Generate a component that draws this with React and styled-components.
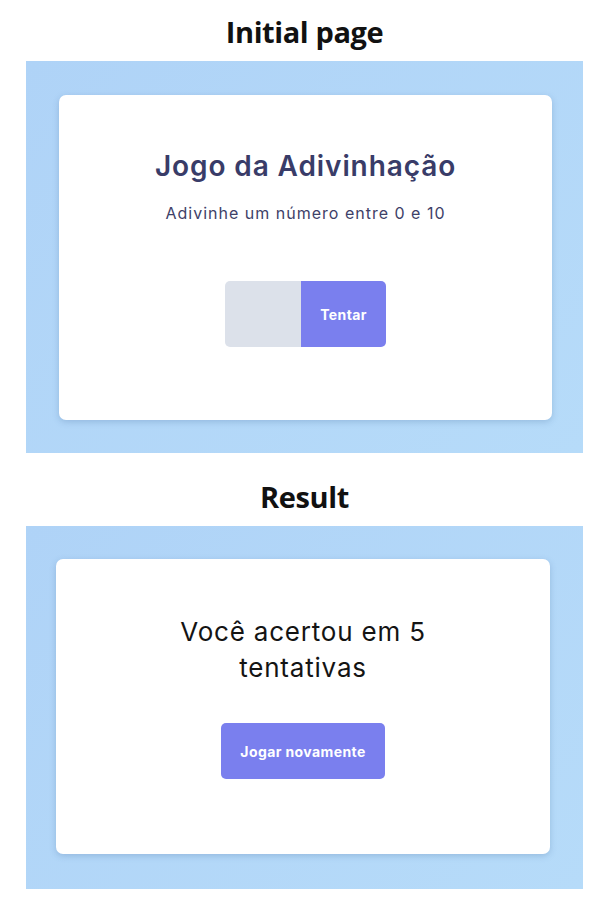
import React, { Component } from 'react';
import styled, { createGlobalStyle } from 'styled-components';

const GlobalStyle = createGlobalStyle`
  * {
    box-sizing: border-box;
  }

  body {
    margin: 0;
    background: #fff;
    font-family: 'Open Sans', 'Liberation Sans', sans-serif;
  }
`;

const Page = styled.main`
  display: flex;
  flex-direction: column;
  width: 610px;
  padding: 0 27px 12px 26px;
`;

const SectionTitle = styled.h2`
  margin: ${props => props.top}px 0 11px;
  line-height: 36px;
  text-align: center;
  font-family: 'Open Sans', 'Noto Sans', sans-serif;
  font-weight: 700;
  font-size: 29px;
  color: #111;
  letter-spacing: -0.4px;
`;

const Panel = styled.section`
  display: flex;
  height: ${props => props.height}px;
  padding: ${props => props.pad};
  background: linear-gradient(135deg, #afd3f7 0%, #b6dbf9 100%);
`;

const Card = styled.div`
  flex: 1;
  display: flex;
  flex-direction: column;
  align-items: center;
  background: #fff;
  border-radius: 7px;
  box-shadow: 0 2px 6px rgba(60, 100, 150, 0.25);
`;

const GameTitle = styled.h1`
  margin: 54px 0 0;
  font-family: 'Inter', 'Open Sans', sans-serif;
  font-weight: 600;
  font-size: 28px;
  line-height: 34px;
  letter-spacing: 0.9px;
  color: #393c68;
`;

const Subtitle = styled.p`
  margin: 19px 0 0;
  font-family: 'Inter', 'Lato', sans-serif;
  font-size: 16px;
  line-height: 22px;
  letter-spacing: 1px;
  color: #3e4168;
`;

const Form = styled.form`
  display: flex;
  margin-top: 57px;
  height: 66px;
  border-radius: 5px;
  overflow: hidden;
`;

const Input = styled.input`
  width: 76px;
  border: none;
  outline: none;
  background: #dce1ea;
  font-family: 'Inter', sans-serif;
  font-size: 18px;
  text-align: center;
  color: #333;
`;

const Button = styled.button`
  width: ${props => props.width}px;
  height: ${props => props.height}px;
  border: none;
  border-radius: ${props => (props.joined ? '0' : '5px')};
  background: #7a7fee;
  color: #fff;
  font-family: 'Inter', 'Lato', sans-serif;
  font-weight: 700;
  font-size: 14px;
  letter-spacing: 0.4px;
  cursor: pointer;
`;

const ResultText = styled.p`
  margin: 55px 0 0;
  width: 280px;
  text-align: center;
  font-family: 'Inter', 'Lato', sans-serif;
  font-size: 26px;
  line-height: 36px;
  letter-spacing: 0.8px;
  color: #141414;
`;

const ResultButtonWrap = styled.div`
  margin-top: 37px;
`;

class App extends Component {
  state = {
    guess: '',
  };

  handleChange = e => {
    this.setState({ guess: e.target.value });
  };

  handleSubmit = e => {
    e.preventDefault();
  };

  render() {
    const { guess } = this.state;
    return (
      <>
        <GlobalStyle />
        <Page>
          <SectionTitle top={14}>Initial page</SectionTitle>
          <Panel height={392} pad='34px 31px 33px 33px'>
            <Card>
              <GameTitle>Jogo da Adivinhação</GameTitle>
              <Subtitle>Adivinhe um número entre 0 e 10</Subtitle>
              <Form onSubmit={this.handleSubmit}>
                <Input type='text' value={guess} onChange={this.handleChange} />
                <Button joined width={85} height={66}>
                  Tentar
                </Button>
              </Form>
            </Card>
          </Panel>
          <SectionTitle top={26}>Result</SectionTitle>
          <Panel height={363} pad='33px 33px 35px 30px'>
            <Card>
              <ResultText>Você acertou em 5 tentativas</ResultText>
              <ResultButtonWrap>
                <Button width={164} height={56}>
                  Jogar novamente
                </Button>
              </ResultButtonWrap>
            </Card>
          </Panel>
        </Page>
      </>
    );
  }
}

export default App;
